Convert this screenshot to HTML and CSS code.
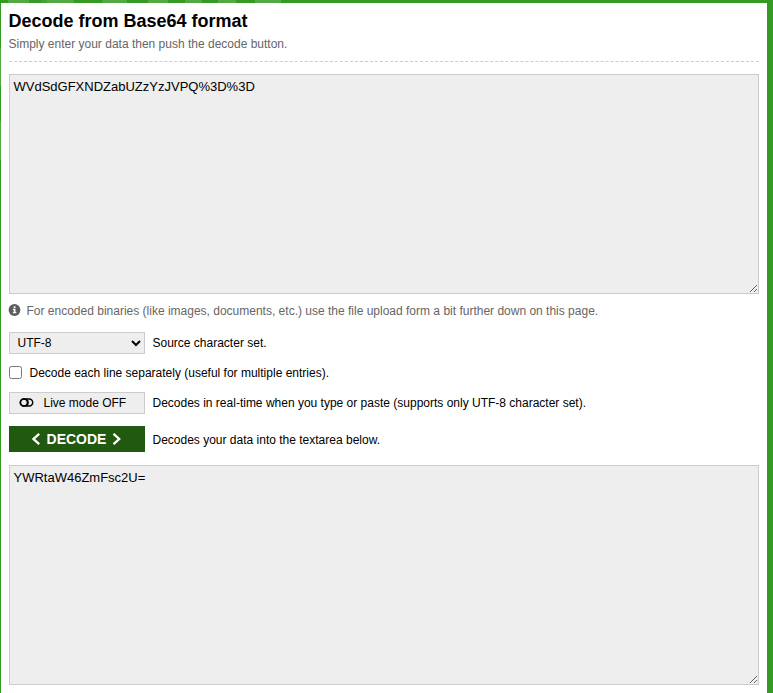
FILE: index.html
```html
<!DOCTYPE html>
<html lang="en">
<head>
<meta charset="utf-8">
<title>Decode from Base64 format</title>
<link rel="stylesheet" href="styles.css">
</head>
<body>
<main class="card">
  <header class="head">
    <h1>Decode from Base64 format</h1>
    <p>Simply enter your data then push the decode button.</p>
  </header>
  <textarea class="data" spellcheck="false">WVdSdGFXNDZabUZzYzJVPQ%3D%3D</textarea>
  <p class="hint">
    <svg class="info" viewBox="0 0 12 12"><circle cx="5.500" cy="6" r="5.900"/><path d="M4.700 2.300h1.800v1.600H4.700zM3.900 4.800h2.600v3.300h.8v1.200H3.900V8.100h.8V6h-.8z" fill="#fff"/></svg>
    <span>For encoded binaries (like images, documents, etc.) use the file upload form a bit further down on this page.</span>
  </p>
  <div class="row">
    <select class="control"><option>UTF-8</option></select>
    <span>Source character set.</span>
  </div>
  <label class="row check"><input type="checkbox"><span>Decode each line separately (useful for multiple entries).</span></label>
  <div class="row">
    <button class="control live" type="button">
      <svg class="toggle" viewBox="0 0 14 9"><rect x=".3" y="1" width="12.400" height="7" rx="3.500"/><circle cx="3.900" cy="4.500" r="3.500"/><path d="M6 1.200a3.600 3.600 0 0 1 0 6.600"/></svg>
      <span>Live mode OFF</span>
    </button>
    <span>Decodes in real-time when you type or paste (supports only UTF-8 character set).</span>
  </div>
  <div class="row submit">
    <button class="decode" type="button">
      <svg class="chevron" viewBox="0 0 9 12"><path d="M7.200.8 1.500 6l5.700 5.200"/></svg>
      <span>DECODE</span>
      <svg class="chevron" viewBox="0 0 9 12"><path d="M1.500.8 7.200 6l-5.700 5.200"/></svg>
    </button>
    <span>Decodes your data into the textarea below.</span>
  </div>
  <textarea class="data" spellcheck="false">YWRtaW46ZmFsc2U=</textarea>
</main>
</body>
</html>
```

FILE: styles.css
```css
* {
  box-sizing: border-box;
}

html {
  height: 100%;
  overflow: hidden;
}

body {
  height: 100%;
  margin: 0;
  padding: 3px 6.5px 0 0.5px;
  font: 12px/16px "Liberation Sans", Arial, sans-serif;
  color: #000;
  background:
    linear-gradient(90deg, transparent 8px, #52a942 8px 29px, transparent 29px 41px, #459f34 41px 47px, #52a942 47px 74px, transparent 74px 102px, #52a942 102px 127px, transparent 127px 148px, #52a942 148px 168px, transparent 168px 185px, #52a942 185px 202px, transparent 202px 218px, #52a942 218px 236px, transparent 236px 255px, #52a942 255px 281px, transparent 281px) 0 0 / 300px 3px no-repeat,
    linear-gradient(#52a942, #52a942) 0 121px / 1px 39px no-repeat,
    linear-gradient(#52a942, #52a942) 0 48px / 1px 38px no-repeat,
    #359a21;
}

.card {
  display: flex;
  flex-direction: column;
  height: 690px;
  padding: 8px 8px 0;
  background: #fff;
}

.head {
  height: 51px;
  margin-bottom: 12px;
  border-bottom: 1px dashed #ccc;
}

h1 {
  margin: 0;
  font-size: 18px;
  line-height: 20px;
}

.head p {
  margin: 5px 0 0;
  color: #666;
}

.data {
  display: block;
  flex: none;
  width: 750px;
  height: 220px;
  margin: 0;
  padding: 4px;
  border: 1px solid #ccc;
  border-radius: 0;
  background: #eee;
  color: #000;
  font: 13px/15px "Liberation Sans", Arial, sans-serif;
  resize: both;
}

.hint {
  display: flex;
  align-items: center;
  gap: 6px;
  height: 16px;
  margin: 9px 0 13px;
  color: #666;
}

.info {
  width: 12px;
  height: 12px;
  margin-top: -2px;
  fill: #5c5c5c;
  overflow: visible;
}

.row {
  display: flex;
  align-items: center;
  gap: 8px;
  height: 22px;
  margin-bottom: 8px;
}

.control {
  width: 136px;
  height: 22px;
  border: 1px solid #ccc;
  border-radius: 0;
  background: #eee;
  color: #000;
  font: inherit;
}

select.control {
  padding: 0 0 0 4px;
}

.check input {
  width: 13px;
  height: 13px;
  margin: 0 -1px 2px 0;
}

.check span {
  margin-left: 1px;
}

.live {
  display: flex;
  align-items: center;
  gap: 10px;
  padding: 0 10px;
}

.toggle {
  width: 14px;
  height: 9px;
  margin-bottom: 1px;
  fill: none;
  stroke: #000;
  stroke-width: 1.5;
  overflow: visible;
}

.submit {
  height: 26px;
  margin: 4px 0 13px;
}

.submit > span {
  margin-top: 2px;
}

.decode {
  display: flex;
  align-items: center;
  justify-content: center;
  gap: 6px;
  width: 136px;
  height: 26px;
  padding: 0;
  border: 0;
  background: #20590f;
  color: #fff;
  font: bold 14px/16px "Liberation Sans", Arial, sans-serif;
}

.chevron {
  width: 9px;
  height: 12px;
  fill: none;
  stroke: #fff;
  stroke-width: 2.3;
}
```
